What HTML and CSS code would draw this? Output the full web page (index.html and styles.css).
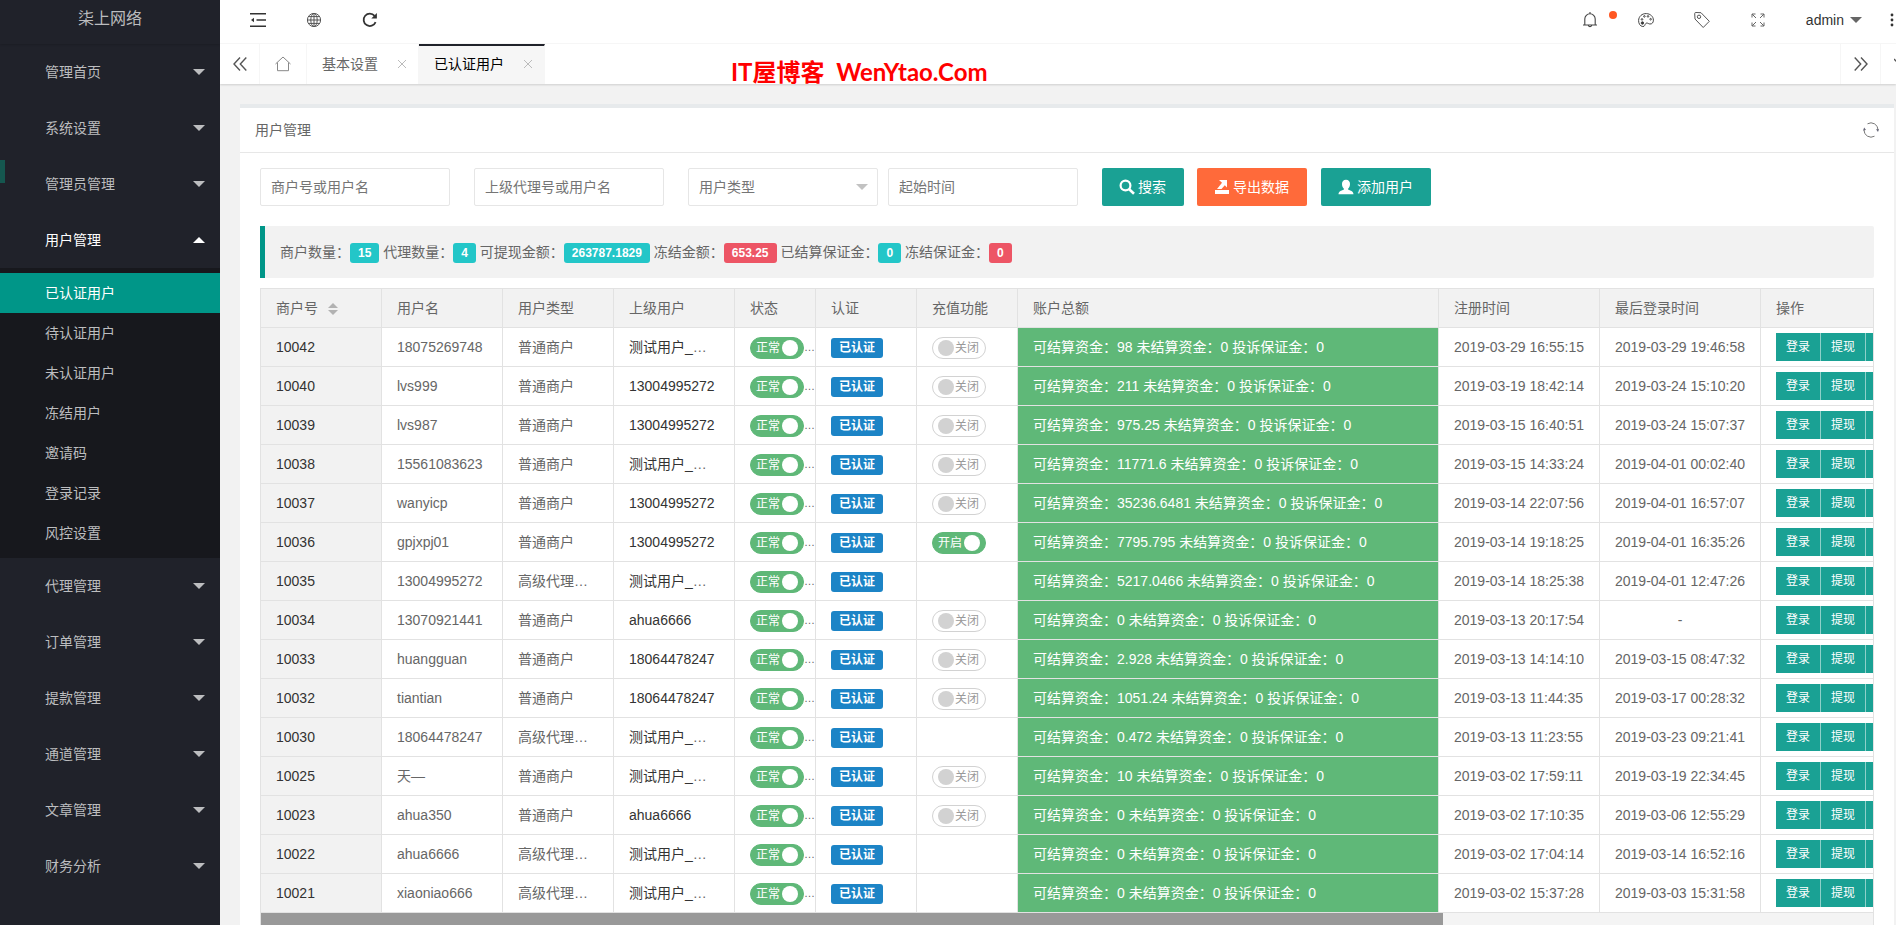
FILE: index.html
```html
<!DOCTYPE html>
<html lang="zh-CN">
<head>
    <meta charset="utf-8">
    <title>用户管理</title>
    <link rel="stylesheet" href="styles.css">
</head>
<body>
    <div class="layout">
        <aside class="side">
            <div class="logo">柒上网络</div>
            <nav class="menu">
                <a href="#" class="menu-item">管理首页<i class="arrow"></i></a>
                <a href="#" class="menu-item">系统设置<i class="arrow"></i></a>
                <a href="#" class="menu-item hover">管理员管理<i class="arrow"></i></a>
                <a href="#" class="menu-item open">用户管理<i class="arrow up"></i></a>
                <div class="submenu">
                    <a href="#" class="active">已认证用户</a>
                    <a href="#">待认证用户</a>
                    <a href="#">未认证用户</a>
                    <a href="#">冻结用户</a>
                    <a href="#">邀请码</a>
                    <a href="#">登录记录</a>
                    <a href="#">风控设置</a>
                </div>
                <a href="#" class="menu-item">代理管理<i class="arrow"></i></a>
                <a href="#" class="menu-item">订单管理<i class="arrow"></i></a>
                <a href="#" class="menu-item">提款管理<i class="arrow"></i></a>
                <a href="#" class="menu-item">通道管理<i class="arrow"></i></a>
                <a href="#" class="menu-item">文章管理<i class="arrow"></i></a>
                <a href="#" class="menu-item">财务分析<i class="arrow"></i></a>
            </nav>
        </aside>

        <div class="main">
            <header class="header">
                <a href="#" class="icon-link" title="侧边伸缩">
                    <svg width="16" height="16" viewBox="0 0 16 16" fill="none" stroke="#333" stroke-width="1.4"><path d="M0 1.700h16M6.500 8H16M0 14.300h16"/><path d="M1 8l3-2.200v4.400z" fill="#333" stroke="none"/></svg>
                </a>
                <a href="#" class="icon-link" title="前台">
                    <svg width="16" height="16" viewBox="0 0 16 16" fill="none" stroke="#555" stroke-width="1"><circle cx="8" cy="8" r="6.6"/><ellipse cx="8" cy="8" rx="3.2" ry="6.6"/><path d="M8 1.4v13.2M1.4 8h13.2M2.4 4.6h11.2M2.4 11.4h11.2"/></svg>
                </a>
                <a href="#" class="icon-link" title="刷新">
                    <svg width="16" height="16" viewBox="0 0 16 16" fill="none" stroke="#333" stroke-width="1.8"><path d="M13.6 10.2A6.2 6.2 0 1 1 12.6 3.8"/><path d="M14.9 1v5.6H9.3z" fill="#333" stroke="none"/></svg>
                </a>
                <div class="header-right">
                    <a href="#" class="icon-link" title="消息">
                        <svg width="16" height="16" viewBox="0 0 16 16" fill="none" stroke="#444" stroke-width="1.1"><path d="M2.8 12.800V7a5.2 5.2 0 0 1 10.4 0v5.8M1 13h14M6.3 13.4a1.8 1.8 0 0 0 3.4 0M8 0v2"/></svg>
                        <span class="dot"></span>
                    </a>
                    <a href="#" class="icon-link" title="主题">
                        <svg width="16" height="16" viewBox="0 0 16 16" fill="none" stroke="#444" stroke-width="1"><path d="M8.4 1.6C4 1.4.8 4.4.6 8.400c-.1 3.2 1.6 6 4.2 6.1 2.2.1 1.6-1.500 3-3 1.300-1.300 2.400.3 4 .5 2.300.2 3.600-1.500 3.600-3.800C15.400 4.500 12.400 1.800 8.400 1.600z"/><circle cx="4" cy="7.4" r=".8"/><circle cx="6.400" cy="4.400" r=".8"/><circle cx="10" cy="4.400" r=".8"/><circle cx="12.600" cy="7.200" r=".8"/><circle cx="4.400" cy="11" r="1.2" fill="#333"/></svg>
                    </a>
                    <a href="#" class="icon-link" title="便签">
                        <svg width="16" height="16" viewBox="0 0 16 16" fill="none" stroke="#555" stroke-width="1"><path d="M.7 1.600Q.7.5 1.800.5L7 .7 15.300 9.300 9.200 15.500 1 7z"/><circle cx="5" cy="4.800" r="1.7"/></svg>
                    </a>
                    <a href="#" class="icon-link" title="全屏">
                        <svg width="14" height="14" viewBox="0 0 14 14" fill="none" stroke="#666" stroke-width="1"><path d="M1 4.500V1h3.500M1 1l4 4M9.500 1H13v3.500M13 1L9 5M1 9.500V13h3.500M1 13l4-4M13 9.500V13H9.500M13 13L9 9"/></svg>
                    </a>
                    <a href="#" class="user">admin<i class="arrow"></i></a>
                    <a href="#" class="more" title="更多">
                        <svg width="4" height="16" viewBox="0 0 4 16" fill="#333"><circle cx="2" cy="3" r="1.4"/><circle cx="2" cy="8" r="1.4"/><circle cx="2" cy="13" r="1.4"/></svg>
                    </a>
                </div>
            </header>

            <div class="tabs">
                <button class="tab-ctrl" title="向左">
                    <svg width="14" height="14" viewBox="0 0 14 14" fill="none" stroke="#555" stroke-width="1.4"><path d="M7 .5L1 7l6 6.500M13.300.5L7.300 7l6 6.500"/></svg>
                </button>
                <a href="#" class="tab home" title="首页">
                    <svg width="16" height="16" viewBox="0 0 16 16" fill="none" stroke="#888" stroke-width="1"><path d="M.5 8L8 1l7.500 7M2.500 6.500v8.200h11V6.500"/></svg>
                </a>
                <a href="#" class="tab">基本设置<svg class="close" width="8" height="8" viewBox="0 0 8 8"><path d="M0 0l8 8M8 0L0 8"/></svg></a>
                <a href="#" class="tab current">已认证用户<svg class="close" width="8" height="8" viewBox="0 0 8 8"><path d="M0 0l8 8M8 0L0 8"/></svg></a>
                <div class="watermark">IT屋博客&nbsp; WenYtao.Com</div>
                <button class="tab-ctrl next" title="向右">
                    <svg width="14" height="14" viewBox="0 0 14 14" fill="none" stroke="#555" stroke-width="1.4"><path d="M.7.5l6 6.500-6 6.500M7 .5L13 7l-6 6.500"/></svg>
                </button>
                <button class="tab-down" title="标签操作">
                    <svg width="14" height="14" viewBox="0 0 14 14" fill="none" stroke="#555" stroke-width="1.4"><path d="M0 2l7 7 7-7"/></svg>
                </button>
            </div>

            <main class="content">
                <section class="card">
                    <div class="card-head">
                        <h1>用户管理</h1>
                        <button class="reload" title="刷新">
                            <svg width="16" height="16" viewBox="0 0 16 16" fill="none" stroke="#777" stroke-width="1"><path d="M4.500 1.800A7 7 0 0 1 15 8M11.500 14.200A7 7 0 0 1 1 8"/><path d="M13 7.200h3L15 10zM0 8.500L1.200 5.500 3 8z" fill="#667" stroke="none"/></svg>
                        </button>
                    </div>
                    <div class="card-body">
                        <form class="search">
                            <input type="text" class="wide-gap" placeholder="商户号或用户名" aria-label="商户号或用户名">
                            <input type="text" class="wide-gap" placeholder="上级代理号或用户名" aria-label="上级代理号或用户名">
                            <div class="select-wrap">
                                <select aria-label="用户类型">
                                    <option>用户类型</option>
                                </select>
                                <i class="arrow"></i>
                            </div>
                            <input type="text" class="wide-gap" placeholder="起始时间" aria-label="起始时间">
                            <button type="button" class="btn">
                                <svg width="16" height="16" viewBox="0 0 16 16" fill="none" stroke="#fff"><circle cx="6.500" cy="6.500" r="4.900" stroke-width="2.200"/><path d="M10.200 10.200l4.800 4.600" stroke-width="2.600"/></svg>搜索
                            </button>
                            <button type="button" class="btn orange">
                                <svg width="16" height="16" viewBox="0 0 16 16" fill="#fff"><path d="M1 11h14v4H1zM5 1h8v7.500l-2.200-2.300L7.500 10H3l5-6.300z"/></svg>导出数据
                            </button>
                            <button type="button" class="btn">
                                <svg width="16" height="16" viewBox="0 0 16 16" fill="#fff"><path d="M8 .8c2.600 0 4 1.700 4 4.200 0 2-.8 3.600-1.800 4.500v1.200c2.800.9 5.200 1.600 5.300 4.500H.5c.1-2.900 2.500-3.600 5.300-4.500V9.500C4.800 8.600 4 7 4 5 4 2.500 5.400.8 8 .8z"/></svg>添加用户
                            </button>
                        </form>

                        <div class="quote">
                            商户数量：<span class="num">15</span>
                            代理数量：<span class="num">4</span>
                            可提现金额：<span class="num">263787.1829</span>
                            冻结金额：<span class="num red">653.25</span>
                            已结算保证金：<span class="num">0</span>
                            冻结保证金：<span class="num red">0</span>
                        </div>

                        <div class="table-box">
                            <table>
                                <colgroup>
                                    <col class="w121"><col class="w121"><col class="w111"><col class="w121"><col class="w81"><col class="w101"><col class="w101"><col class="w421"><col class="w161"><col class="w161"><col class="w301">
                                </colgroup>
                                <thead>
                                    <tr>
                                        <th>商户号<span class="sort"></span></th>
                                        <th>用户名</th>
                                        <th>用户类型</th>
                                        <th>上级用户</th>
                                        <th>状态</th>
                                        <th>认证</th>
                                        <th>充值功能</th>
                                        <th>账户总额</th>
                                        <th>注册时间</th>
                                        <th>最后登录时间</th>
                                        <th>操作</th>
                                    </tr>
                                </thead>
                                <tbody id="rows"></tbody>
                            </table>
                            <div class="scrollbar"><div class="thumb"></div></div>
                        </div>
                    </div>
                </section>
            </main>
        </div>
    </div>
    <script src="table.js"></script>
</body>
</html>
```
FILE: styles.css
```css
* {
    box-sizing: border-box;
}
body {
    margin: 0;
    height: 100vh;
    overflow: hidden;
    font: 14px/24px "Liberation Sans", "Noto Sans CJK SC", sans-serif;
    color: #666;
    background: #f2f2f2;
}
a {
    color: inherit;
    text-decoration: none;
}
button, input, select {
    font: inherit;
    color: inherit;
    margin: 0;
}
button {
    border: none;
    background: none;
    padding: 0;
    cursor: pointer;
}
svg {
    display: block;
    flex-shrink: 0;
}
.arrow {
    width: 0;
    height: 0;
    border: 6px solid transparent;
    border-top-color: currentColor;
    border-bottom-width: 0;
}
.arrow.up {
    border-top-width: 0;
    border-bottom: 6px solid currentColor;
}
.layout {
    display: flex;
    height: 100%;
}

/* sidebar */
.side {
    width: 220px;
    flex-shrink: 0;
    background: #20222a;
    color: #bcbdbf;
    overflow: hidden;
}
.logo {
    height: 44px;
    line-height: 38px;
    text-align: center;
    font-size: 16px;
    box-shadow: 0 1px 2px rgba(0,0,0,.15);
}
.menu-item {
    display: flex;
    align-items: center;
    justify-content: space-between;
    height: 56px;
    padding: 0 15px 0 45px;
}
.menu-item.open {
    color: #fff;
}
.menu-item.hover {
    position: relative;
}
.menu-item.hover::before {
    content: "";
    position: absolute;
    left: 0;
    top: 4px;
    width: 5px;
    height: 23px;
    background: #15574f;
}
.submenu {
    padding: 5px 0;
    background: #17181d;
}
.submenu a {
    display: block;
    line-height: 40px;
    padding-left: 45px;
}
.submenu a.active {
    background: #009688;
    color: #fff;
}

/* top bar */
.main {
    flex: 1;
    min-width: 0;
}
.header {
    display: flex;
    height: 44px;
    padding: 0 0 4px 10px;
    background: #fff;
    border-bottom: 1px solid #f6f6f6;
    color: #333;
}
.icon-link {
    display: flex;
    align-items: center;
    justify-content: center;
    width: 56px;
    position: relative;
}
.header-right {
    display: flex;
    margin-left: auto;
}
.dot {
    position: absolute;
    top: 11px;
    right: 1px;
    width: 8px;
    height: 8px;
    border-radius: 50%;
    background: #ff5722;
}
.user {
    display: flex;
    align-items: center;
    gap: 6px;
    padding: 0 28px 0 20px;
}
.user .arrow {
    color: #666;
}
.more {
    display: flex;
    align-items: center;
    width: 6px;
}

/* page tabs */
.tabs {
    display: flex;
    height: 40px;
    background: #fff;
    box-shadow: 0 1px 2px rgba(0,0,0,.15);
    clip-path: inset(0 0 -3px 0);
}
.tab-ctrl, .tab {
    display: flex;
    align-items: center;
    justify-content: center;
    border-right: 1px solid #f6f6f6;
}
.tab-ctrl {
    width: 40px;
}
.tab-ctrl.next {
    width: 41px;
    margin-left: auto;
    border-left: 1px solid #f6f6f6;
}
.tab {
    gap: 20px;
    padding: 0 12px 0 15px;
}
.tab.home {
    width: 47px;
    padding: 0;
}
.tab.current {
    border-top: 2px solid #20222a;
    padding-bottom: 2px;
    background: #f6f6f6;
    color: #000;
}
.close {
    stroke: #bbb;
    fill: none;
}
.watermark {
    margin-left: 186px;
    padding-top: 16px;
    font: bold 24px/24px Lato, "Noto Sans CJK SC", sans-serif;
    color: #f00;
}
.tab-down {
    width: 15px;
    padding-left: 13px;
    overflow: hidden;
}

/* card */
.content {
    padding: 20px 2px 0 20px;
}
.card {
    background: #fff;
    border-top: 4px solid #e7eaec;
}
.card-head {
    display: flex;
    align-items: center;
    justify-content: space-between;
    height: 45px;
    padding: 0 15px;
    border-bottom: 1px solid #e7e7e7;
}
.card-head h1 {
    margin: 0;
    font-size: 14px;
    font-weight: normal;
}
.card-body {
    padding: 15px 20px 0;
}
.search {
    display: flex;
    margin-bottom: 20px;
}
.search input, .search select {
    width: 190px;
    height: 38px;
    padding: 0 10px;
    border: 1px solid #e6e6e6;
    border-radius: 2px;
    background: #fff;
    color: #757575;
}
.search input::placeholder {
    color: #757575;
}
.search select {
    appearance: none;
}
.search .wide-gap {
    margin-right: 24px;
}
.select-wrap {
    position: relative;
    margin-right: 10px;
}
.select-wrap .arrow {
    position: absolute;
    right: 10px;
    top: 16px;
    color: #c2c2c2;
    pointer-events: none;
}
.btn {
    display: flex;
    align-items: center;
    gap: 3px;
    height: 38px;
    padding: 0 18px 0 17px;
    margin-right: 13px;
    border-radius: 2px;
    background: #1aa194;
    color: #fff;
}
.btn.orange {
    margin-right: 14px;
    background: #ff6a3a;
}
.quote {
    padding: 14px 15px;
    margin-bottom: 10px;
    border-left: 5px solid #009688;
    border-radius: 0 2px 2px 0;
    background: #f2f2f2;
}
.num {
    display: inline-block;
    padding: 0 8px;
    border-radius: 3px;
    background: #23c6c8;
    color: #fff;
    font-size: 12px;
    font-weight: bold;
    line-height: 20px;
}
.num.red {
    background: #ed5565;
}

/* table */
.table-box {
    border: 1px solid #e2e2e2;
    overflow: hidden;
}
table {
    table-layout: fixed;
    width: 1801px;
    border-collapse: separate;
    border-spacing: 0;
}
.w81 { width: 81px; }
.w101 { width: 101px; }
.w111 { width: 111px; }
.w121 { width: 121px; }
.w161 { width: 161px; }
.w301 { width: 301px; }
.w421 { width: 421px; }
th, td {
    height: 39px;
    padding: 0 15px;
    border-right: 1px solid #e2e2e2;
    border-bottom: 1px solid #e2e2e2;
    text-align: left;
    font-weight: normal;
    white-space: nowrap;
    overflow: hidden;
    text-overflow: ellipsis;
}
th {
    background: #f2f2f2;
}
.sort {
    display: inline-block;
    width: 10px;
    height: 12px;
    margin-left: 10px;
    vertical-align: -2px;
}
.sort::before, .sort::after {
    content: "";
    display: block;
    border: 5px solid transparent;
}
.sort::before {
    border-top: 0;
    border-bottom-color: #b2b2b2;
    margin-bottom: 2px;
}
.sort::after {
    border-bottom: 0;
    border-top-color: #b2b2b2;
}
td.id {
    background: #f2f2f2;
    color: #333;
}
td a {
    color: #333;
}
td.money {
    background: #5fb878;
    color: #fff;
}
td.center {
    text-align: center;
}
td.state {
    padding-right: 0;
    font-size: 11px;
    text-overflow: clip;
}
.switch {
    display: inline-flex;
    align-items: center;
    width: 54px;
    height: 22px;
    padding: 0 5px;
    border: 1px solid #d2d2d2;
    border-radius: 20px;
    font-size: 12px;
    line-height: 20px;
    color: #999;
    vertical-align: middle;
}
.switch input {
    appearance: none;
    width: 16px;
    height: 16px;
    margin-right: 1px;
    border-radius: 50%;
    background: #d2d2d2;
}
.switch.on {
    border-color: #5fb878;
    background: #5fb878;
    color: #fff;
}
.switch.on input {
    order: 1;
    margin: 0 0 0 2px;
    background: #fff;
}
.badge {
    display: inline-block;
    padding: 0 8px;
    border-radius: 3px;
    background: #1c84c6;
    color: #fff;
    font-size: 12px;
    font-weight: bold;
    line-height: 20px;
    vertical-align: middle;
}
.ops {
    display: flex;
}
.ops button {
    min-width: 44px;
    height: 28px;
    padding: 0 10px;
    background: #1aa194;
    color: #fff;
    font-size: 12px;
}
.ops button + button {
    border-left: 1px solid #8ed0c9;
    min-width: 45px;
}
.scrollbar {
    height: 17px;
    background: #f4f4f4;
}
.thumb {
    width: 73.3%;
    height: 100%;
    background: #999;
}
```
FILE: table.js
```js
// [商户号, 用户名, 高级代理, 上级用户, 充值功能, 可结算资金, 注册时间, 最后登录时间]
var P = '测试用户_一号';
var users = [
    [10042, '18075269748', 0, P, 0, '98', '2019-03-29 16:55:15', '2019-03-29 19:46:58'],
    [10040, 'lvs999', 0, '13004995272', 0, '211', '2019-03-19 18:42:14', '2019-03-24 15:10:20'],
    [10039, 'lvs987', 0, '13004995272', 0, '975.25', '2019-03-15 16:40:51', '2019-03-24 15:07:37'],
    [10038, '15561083623', 0, P, 0, '11771.6', '2019-03-15 14:33:24', '2019-04-01 00:02:40'],
    [10037, 'wanyicp', 0, '13004995272', 0, '35236.6481', '2019-03-14 22:07:56', '2019-04-01 16:57:07'],
    [10036, 'gpjxpj01', 0, '13004995272', 1, '7795.795', '2019-03-14 19:18:25', '2019-04-01 16:35:26'],
    [10035, '13004995272', 1, P, null, '5217.0466', '2019-03-14 18:25:38', '2019-04-01 12:47:26'],
    [10034, '13070921441', 0, 'ahua6666', 0, '0', '2019-03-13 20:17:54', '-'],
    [10033, 'huangguan', 0, '18064478247', 0, '2.928', '2019-03-13 14:14:10', '2019-03-15 08:47:32'],
    [10032, 'tiantian', 0, '18064478247', 0, '1051.24', '2019-03-13 11:44:35', '2019-03-17 00:28:32'],
    [10030, '18064478247', 1, P, null, '0.472', '2019-03-13 11:23:55', '2019-03-23 09:21:41'],
    [10025, '天—', 0, P, 0, '10', '2019-03-02 17:59:11', '2019-03-19 22:34:45'],
    [10023, 'ahua350', 0, 'ahua6666', 0, '0', '2019-03-02 17:10:35', '2019-03-06 12:55:29'],
    [10022, 'ahua6666', 1, P, null, '0', '2019-03-02 17:04:14', '2019-03-14 16:52:16'],
    [10021, 'xiaoniao666', 1, P, null, '0', '2019-03-02 15:37:28', '2019-03-03 15:31:58']
];

function toggle(on, text) {
    return '<label class="switch' + (on ? ' on' : '') + '"><input type="checkbox"' +
        (on ? ' checked' : '') + '>' + text + '</label>';
}

document.getElementById('rows').innerHTML = users.map(function (u) {
    return '<tr>' +
        '<td class="id">' + u[0] + '</td>' +
        '<td>' + u[1] + '</td>' +
        '<td>' + (u[2] ? '高级代理商户' : '普通商户') + '</td>' +
        '<td><a href="#">' + u[3] + '</a></td>' +
        '<td class="state">' + toggle(true, '正常') + '…</td>' +
        '<td><span class="badge">已认证</span></td>' +
        '<td>' + (u[4] === null ? '' : toggle(u[4], u[4] ? '开启' : '关闭')) + '</td>' +
        '<td class="money">可结算资金：' + u[5] + ' 未结算资金：0 投诉保证金：0</td>' +
        '<td>' + u[6] + '</td>' +
        '<td' + (u[7] === '-' ? ' class="center"' : '') + '>' + u[7] + '</td>' +
        '<td><div class="ops"><button>登录</button><button>提现</button><button aria-label="更多"></button></div></td>' +
        '</tr>';
}).join('');
```
